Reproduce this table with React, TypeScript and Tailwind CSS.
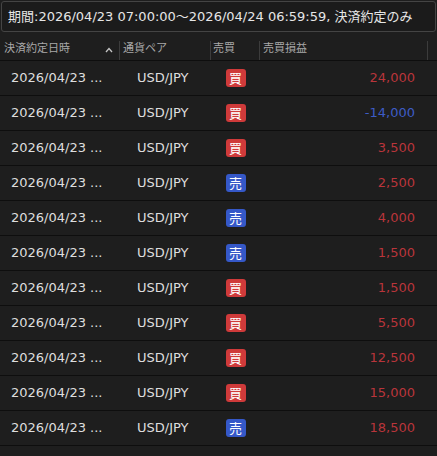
import React from "react";

type Trade = { side: "buy" | "sell"; pl: string };

const trades: Trade[] = [
  { side: "buy", pl: "24,000" },
  { side: "buy", pl: "-14,000" },
  { side: "buy", pl: "3,500" },
  { side: "sell", pl: "2,500" },
  { side: "sell", pl: "4,000" },
  { side: "sell", pl: "1,500" },
  { side: "buy", pl: "1,500" },
  { side: "buy", pl: "5,500" },
  { side: "buy", pl: "12,500" },
  { side: "buy", pl: "15,000" },
  { side: "sell", pl: "18,500" },
];

const font = "font-['DejaVu_Sans','Noto_Sans_CJK_JP',sans-serif]";

const Sep = () => <div className="w-px h-[19px] self-end bg-[#3c3c3c]" />;

const App = () => {
  return (
    <div className={`w-[437px] h-[456px] overflow-hidden bg-[#1e1e1e] ${font}`}>
      {/* Filter summary */}
      <div className="pt-px px-px">
        <div className="h-[31px] flex items-center px-[6px] rounded-[3px] border border-[#444] bg-[#1b1b1b] text-[13px] text-[#e6e6e6] whitespace-nowrap">
          期間:2026/04/23 07:00:00～2026/04/24 06:59:59, 決済約定のみ
        </div>
      </div>

      {/* Column headers */}
      <div className="h-[29px] flex border-b border-[#0e0e0e] text-[11px] text-[#a9a9a9]">
        <div className="w-[119px] flex items-center justify-between pl-[4px] pr-[6px] pt-[6px]">
          <span>決済約定日時</span>
          <svg width="8" height="6" viewBox="0 0 8 6" className="mt-px">
            <path d="M1 5 L4 1.5 L7 5" fill="none" stroke="#c4c4c4" strokeWidth="1.3" />
          </svg>
        </div>
        <Sep />
        <div className="w-[90px] flex items-center pl-[3px] pt-[6px]">通貨ペア</div>
        <Sep />
        <div className="w-[48px] flex items-center pl-[2px] pt-[6px]">売買</div>
        <Sep />
        <div className="w-[167px] flex items-center pl-[3px] pt-[6px]">売買損益</div>
        <Sep />
      </div>

      {/* Rows */}
      {trades.map((t, i) => (
        <div key={i} className="h-[35px] flex items-center border-b border-[#0e0e0e] text-[13px] text-[#dedede]">
          <div className="w-[120px] pl-[11px] whitespace-nowrap">2026/04/23 ...</div>
          <div className="w-[91px] pl-[17px]">USD/JPY</div>
          <div className="w-[49px] flex justify-center">
            <span
              className={`w-[20px] h-[18px] rounded-[3px] flex items-center justify-center text-[13px] leading-none text-white ${
                t.side === "buy" ? "bg-[#cf3a3a]" : "bg-[#3558c8]"
              }`}
            >
              {t.side === "buy" ? "買" : "売"}
            </span>
          </div>
          <div
            className={`w-[155px] text-right ${
              t.pl.startsWith("-") ? "text-[#3d5cc6]" : "text-[#b9353b]"
            }`}
          >
            {t.pl}
          </div>
        </div>
      ))}
    </div>
  );
};

export default App;
